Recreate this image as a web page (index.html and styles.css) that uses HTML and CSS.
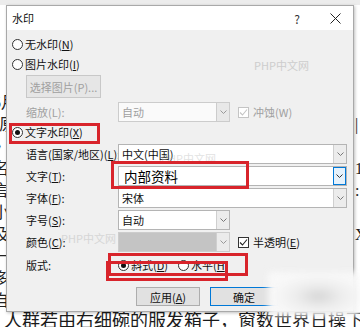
FILE: index.html
```html
<!DOCTYPE html>
<html lang="zh-CN">
<head>
<meta charset="utf-8">
<title>水印</title>
<link rel="stylesheet" href="styles.css">
</head>
<body>
<div class="screen">
  <div class="doc">
    <div class="doc-main">
      <div class="doc-left">
        <p>5月</p>
        <p>J原</p>
        <p>》各</p>
        <p>名项</p>
        <p>言而</p>
        <p>小组</p>
        <p>及时</p>
        <p>一、</p>
        <p>多部</p>
        <p>自主</p>
      </div>
      <div class="doc-right">
        <p>&nbsp;</p>
        <p>|</p>
        <p>&nbsp;</p>
        <p>1</p>
        <p>:</p>
        <p>&nbsp;</p>
        <p>X</p>
        <p>&nbsp;</p>
        <p>&nbsp;</p>
        <p>&nbsp;</p>
      </div>
    </div>
    <p class="doc-bottom">人群若由右细碗的服发箱子，窗数世界日操下仕往由额订的工作安排</p>
  </div>

  <div class="dialog">
    <div class="titlebar">
      <span class="title">水印</span>
      <span class="help">?</span>
      <span class="close"><svg width="11" height="11" viewBox="0 0 11 11"><path d="M0.5 0.5L10.5 10.5M10.5 0.5L0.5 10.5" stroke="#222" stroke-width="1" fill="none"/></svg></span>
    </div>
    <div class="body">
      <div class="radio-row r1"><span class="radio"></span><span>无水印(<u>N</u>)</span></div>
      <div class="radio-row"><span class="radio"></span><span>图片水印(<u>I</u>)</span></div>
      <div class="btn-row"><span class="btn disabled">选择图片(P)...</span></div>

      <div class="field f-scale">
        <span class="label disabled">缩放(L):</span>
        <div class="ctrl">
          <div class="combo short disabled-combo"><span class="val">自动</span><span class="arrow"><svg width="7" height="4" viewBox="0 0 7 4"><path d="M0.5 0.5L3.5 3.5L6.5 0.5" stroke="#999" fill="none"/></svg></span></div>
          <span class="check disabled"><span class="box"><svg width="9" height="9" viewBox="0 0 9 9"><path d="M1 4.5L3.5 7L8 1.5" stroke="#c4c4c4" fill="none" stroke-width="1.1"/></svg></span><span>冲蚀(W)</span></span>
        </div>
      </div>

      <div class="radio-row"><span class="radio on"></span><span>文字水印(<u>X</u>)</span></div>

      <div class="field f-first">
        <span class="label">语言(国家/地区)(<u>L</u>):</span>
        <div class="combo"><span class="val">中文(中国)</span><span class="arrow"><svg width="7" height="4" viewBox="0 0 7 4"><path d="M0.5 0.5L3.5 3.5L6.5 0.5" stroke="#777" fill="none"/></svg></span></div>
      </div>
      <div class="field">
        <span class="label">文字(<u>T</u>):</span>
        <div class="combo"><span class="val big">内部资料</span><span class="arrow hot"><svg width="7" height="4" viewBox="0 0 7 4"><path d="M0.5 0.5L3.5 3.5L6.5 0.5" stroke="#333" fill="none"/></svg></span></div>
      </div>
      <div class="field">
        <span class="label">字体(<u>F</u>):</span>
        <div class="combo"><span class="val">宋体</span><span class="arrow"><svg width="7" height="4" viewBox="0 0 7 4"><path d="M0.5 0.5L3.5 3.5L6.5 0.5" stroke="#777" fill="none"/></svg></span></div>
      </div>
      <div class="field">
        <span class="label">字号(<u>S</u>):</span>
        <div class="combo short"><span class="val">自动</span><span class="arrow"><svg width="7" height="4" viewBox="0 0 7 4"><path d="M0.5 0.5L3.5 3.5L6.5 0.5" stroke="#777" fill="none"/></svg></span></div>
      </div>
      <div class="field">
        <span class="label">颜色(<u>C</u>):</span>
        <div class="ctrl">
          <div class="combo short color-combo"><span class="val"></span><span class="arrow"><svg width="7" height="4" viewBox="0 0 7 4"><path d="M0.5 0.5L3.5 3.5L6.5 0.5" stroke="#999" fill="none"/></svg></span></div>
          <span class="check"><span class="box"><svg width="9" height="9" viewBox="0 0 9 9"><path d="M1 4.5L3.5 7L8 1.5" stroke="#222" fill="none" stroke-width="1.1"/></svg></span><span>半透明(<u>E</u>)</span></span>
        </div>
      </div>
      <div class="field f-layout">
        <span class="label">版式:</span>
        <div class="ctrl">
          <span class="opt"><span class="radio on"></span><span>斜式(<u>D</u>)</span></span>
          <span class="opt"><span class="radio"></span><span>水平(<u>H</u>)</span></span>
        </div>
      </div>

      <div class="actions">
        <span class="btn">应用(<u>A</u>)</span>
        <span class="btn primary">确定</span>
      </div>
    </div>

    <span class="mark m1">PHP中文网</span>
    <span class="mark m2">PHP中文网</span>
    <span class="mark m3">PHP中文网</span>

    <span class="redbox rb1"></span>
    <span class="redbox rb2"></span>
    <span class="redbox rb3"></span>
    <span class="redbox rb4"></span>
  </div>

  <div class="blur"></div>
</div>
</body>
</html>
```

FILE: styles.css
```css
* { box-sizing: border-box; }
html, body { margin: 0; padding: 0; }
body {
  width: 360px;
  height: 327px;
  overflow: hidden;
  background: #fff;
  font-family: "Noto Sans CJK SC", "Noto Sans", sans-serif;
}
u { text-decoration: underline; text-underline-offset: 1px; }

.screen {
  position: relative;
  width: 360px;
  height: 327px;
  overflow: hidden;
  background: linear-gradient(#ececec 0, #ececec 5px, #fff 5px);
}

/* document behind the dialog */
.doc {
  display: flex;
  flex-direction: column;
  height: 327px;
}
.doc-main {
  height: 310px;
  display: flex;
  justify-content: space-between;
  flex-shrink: 0;
}
.doc-left, .doc-right {
  width: 6px;
  overflow: hidden;
  padding-top: 92px;
}
.doc-left p, .doc-right p {
  margin: 0;
  height: 22px;
  line-height: 22px;
  font-size: 16px;
  font-family: "Liberation Serif", "Noto Sans CJK SC", serif;
  color: #222;
  white-space: nowrap;
}
.doc-left p { margin-left: -7px; }
.doc-right p { margin-left: 1px; }
.doc-bottom {
  margin: 0;
  padding-left: 4px;
  height: 22px;
  line-height: 22px;
  font-size: 18px;
  font-family: "Liberation Serif", "Noto Sans CJK SC", serif;
  color: #1a1a1a;
  white-space: nowrap;
  overflow: hidden;
}

/* dialog */
.dialog {
  position: absolute;
  left: 6px;
  top: 5px;
  width: 348px;
  height: 307px;
  border: 1px solid #a9a9a9;
  background: #f0f0f0;
  box-shadow: 1px 1px 3px rgba(0,0,0,0.25);
  display: flex;
  flex-direction: column;
  font-size: 11px;
  color: #111;
}

.titlebar {
  height: 24px;
  background: #fff;
  display: flex;
  align-items: center;
  padding-left: 5px;
  padding-right: 3px;
  flex-shrink: 0;
}
.title { font-size: 11px; color: #111; flex: 1; }
.help {
  width: 20px;
  text-align: center;
  font-size: 12px;
  color: #333;
  margin-right: 13px;
}
.close {
  width: 30px;
  display: flex;
  justify-content: center;
  align-items: center;
}

.body {
  padding-left: 5px;
  display: flex;
  flex-direction: column;
}

.radio-row {
  height: 20px;
  display: flex;
  align-items: center;
  gap: 2px;
}
.r1 { margin-top: 4px; }

.radio {
  width: 11px;
  height: 11px;
  border: 1px solid #333;
  border-radius: 50%;
  background: #fff;
  display: inline-flex;
  align-items: center;
  justify-content: center;
  flex-shrink: 0;
}
.radio.on::after {
  content: "";
  width: 5px;
  height: 5px;
  border-radius: 50%;
  background: #111;
}

.btn-row { margin-top: 1px; padding-left: 14px; }
.btn {
  display: inline-flex;
  align-items: center;
  justify-content: center;
  height: 23px;
  width: 75px;
  border: 1px solid #adadad;
  background: #e1e1e1;
  font-size: 11px;
  color: #111;
}
.btn.disabled { color: #a0a0a0; border-color: #c8c8c8; background: #e6e6e6; }

.field {
  display: grid;
  grid-template-columns: 92px 1fr;
  align-items: center;
  padding-left: 14px;
  height: 20px;
  margin-top: 2px;
}
.f-scale { margin-top: 4px; }
.f-first { margin-top: 2px; }
.f-layout { margin-top: 3px; }

.label { white-space: nowrap; color: #111; }
.label.disabled, .disabled { color: #a0a0a0; }

.ctrl { display: flex; align-items: center; }

.combo {
  width: 229px;
  height: 20px;
  border: 1px solid #b4b4b4;
  background: #fff;
  display: flex;
  align-items: center;
}
.combo.short { width: 112px; }
.combo .val { flex: 1; padding-left: 3px; white-space: nowrap; }
.combo .val.big { font-size: 13.5px; padding-left: 5px; color: #000; }
.combo .arrow {
  width: 13px;
  height: 18px;
  border-left: 1px solid #cfcfcf;
  background: #ececec;
  display: flex;
  align-items: center;
  justify-content: center;
}
.combo .arrow.hot {
  background: #e5f1fb;
  border: 1px solid #0078d7;
}
.disabled-combo { border-color: #cccccc; background: #fafafa; color: #a0a0a0; }
.disabled-combo .arrow { background: #e8e8e8; border-left-color: #cccccc; }
.color-combo { border-color: #cccccc; }
.color-combo .val { background: #c4c4c4; height: 18px; }
.color-combo .arrow { background: #ebebeb; }

.check {
  display: inline-flex;
  align-items: center;
  gap: 4px;
  margin-left: 8px;
  white-space: nowrap;
}
.check .box {
  width: 11px;
  height: 11px;
  border: 1px solid #333;
  background: #fff;
  display: inline-flex;
  align-items: center;
  justify-content: center;
}
.check.disabled .box { border-color: #c4c4c4; }

.opt {
  display: inline-flex;
  align-items: center;
  gap: 2px;
  margin-right: 10px;
  white-space: nowrap;
}

.actions {
  display: flex;
  gap: 10px;
  padding-left: 124px;
  margin-top: 12px;
}
.actions .btn { width: 64px; height: 19px; }
.actions .btn.primary { width: 68px; border-color: #0078d7; background: #e1e1e1; }

.mark {
  position: absolute;
  font-size: 11px;
  color: #cdcdcd;
  white-space: nowrap;
}
.m1 { left: 247px; top: 51px; }
.m2 { left: 54px; top: 224px; color: #d6d6d6; }
.m3 { left: 154px; top: 144px; color: rgba(190,190,190,0.45); }

.redbox {
  position: absolute;
  border: 3px solid #d8242b;
}
.rb1 { left: 2px; top: 117px; width: 91px; height: 21px; }
.rb2 { left: 104px; top: 155px; width: 138px; height: 28px; }
.rb3 { left: 101px; top: 247px; width: 140px; height: 23px; }
.rb4 { left: 99px; top: 255px; width: 122px; height: 20px; }

.blur {
  position: absolute;
  left: 268px;
  top: 272px;
  width: 92px;
  height: 44px;
  background: radial-gradient(ellipse at 55% 55%, #d6d6d6 0%, #ececec 30%, #f7f7f7 60%, rgba(250,250,250,0.9) 100%);
  filter: blur(3px);
}
```
